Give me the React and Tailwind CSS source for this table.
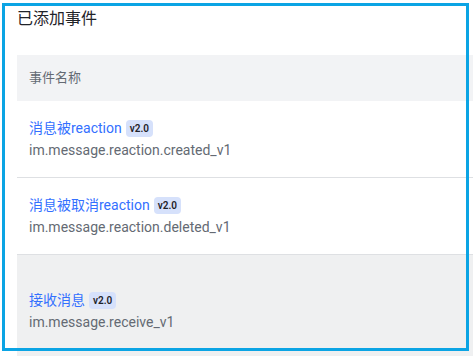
import React from "react";

const events = [
  { name: "消息被reaction", key: "im.message.reaction.created_v1" },
  { name: "消息被取消reaction", key: "im.message.reaction.deleted_v1" },
  { name: "接收消息", key: "im.message.receive_v1", hover: true },
];

function EventRow({ name, eventKey, hover }) {
  return (
    <div
      className={`flex flex-col justify-center px-3 ${
        hover ? "bg-[#eff0f1] pt-[34px] pb-[24px]" : "bg-white h-[77px] border-b border-[#dee0e3]"
      }`}
    >
      <div className="flex items-center gap-1 h-[22px]">
        <span className="text-[14px] text-[#3370ff]">{name}</span>
        <span className="rounded-[4px] bg-[#d6e1fb] px-[4px] h-[17px] leading-[17px] text-[10px] font-semibold text-[#1f2329]">
          v2.0
        </span>
      </div>
      <div className="text-[14px] leading-[22px] text-[#646a73]">{eventKey}</div>
    </div>
  );
}

function App() {
  return (
    <div
      className="relative w-[473px] h-[356px] overflow-hidden bg-white"
      style={{ fontFamily: 'Roboto, "Noto Sans CJK SC", sans-serif' }}
    >
      <div className="pl-[17px] pt-[8px]">
        <h2 className="text-[16px] leading-[22px] text-[#1f2329] font-normal">已添加事件</h2>

        <div className="mt-[25px] w-[500px]">
          {/* table header */}
          <div className="h-[46px] bg-[#f2f3f5] flex items-center px-3 text-[13px] text-[#646a73]">
            事件名称
          </div>
          {events.map((e) => (
            <EventRow key={e.key} name={e.name} eventKey={e.key} hover={e.hover} />
          ))}
        </div>
      </div>

      {/* selection outline */}
      <div className="absolute left-[2px] top-[3px] w-[467px] h-[348px] border-[3px] border-[#0ba4e4] pointer-events-none" />
    </div>
  );
}

export default App;
